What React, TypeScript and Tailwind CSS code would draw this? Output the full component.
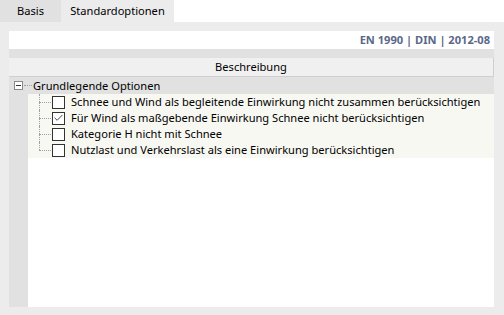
import { Check } from "lucide-react";

const options = [
  { label: "Schnee und Wind als begleitende Einwirkung nicht zusammen berücksichtigen", checked: false },
  { label: "Für Wind als maßgebende Einwirkung Schnee nicht berücksichtigen", checked: true },
  { label: "Kategorie H nicht mit Schnee", checked: false },
  { label: "Nutzlast und Verkehrslast als eine Einwirkung berücksichtigen", checked: false },
];

function OptionRow({ label, checked, last }: { label: string; checked: boolean; last: boolean }) {
  return (
    <div className="flex h-4">
      <div className="w-[19px] shrink-0 bg-[#e1e1e1]" />
      <div className="flex flex-1 items-center bg-[#f8f8f3]">
        {/* tree connector */}
        <div className="relative h-4 w-[24px] shrink-0">
          <div
            className={`absolute left-[11px] top-0 border-l border-dotted border-[#a0a0a0] ${last ? "h-2" : "h-4"}`}
          />
          <div className="absolute left-[11px] top-2 w-[12px] border-t border-dotted border-[#a0a0a0]" />
        </div>
        <div className="flex h-[13px] w-[13px] shrink-0 items-center justify-center border border-[#333333] bg-white">
          {checked && <Check size={12} strokeWidth={1.8} className="text-[#222222]" />}
        </div>
        <span className="ml-[6px] whitespace-nowrap text-[#000000]">{label}</span>
      </div>
    </div>
  );
}

export default function App() {
  return (
    <div
      className="h-[315px] w-[504px] overflow-hidden bg-white text-[11.1px] leading-none text-black"
      style={{ fontFamily: '"Noto Sans", "Liberation Sans", sans-serif' }}
    >
      {/* tabs */}
      <div className="flex h-[22px]">
        <div className="flex w-[61px] items-center justify-center bg-[#e1e1e1]">Basis</div>
        <div className="flex w-[113px] items-center justify-center bg-[#ececec]">Standardoptionen</div>
        <div className="flex-1 bg-white" />
      </div>

      {/* panel */}
      <div className="flex h-[293px] flex-col bg-[#ececec] pb-[8px] pl-[9px] pr-[10px] pt-[9px]">
        <div className="flex h-[18px] items-center justify-end bg-white pr-[4px] font-bold text-[#5a6889]">
          EN 1990 | DIN | 2012-08
        </div>
        <div className="h-[9px] bg-[#e1e1e1]" />
        <div className="flex h-[19px] items-center justify-center border-b border-r border-[#cfcfcf] bg-[#f0f0f0]">
          Beschreibung
        </div>

        <div className="flex flex-1 flex-col bg-white">
          {/* group row */}
          <div className="flex h-[17px] items-center bg-[#e1e1e1]">
            <div className="ml-[5px] flex h-[9px] w-[9px] items-center justify-center border border-[#8a8a8a] bg-white">
              <div className="h-px w-[5px] bg-[#333333]" />
            </div>
            <div className="ml-[1px] w-[8px] border-t border-dotted border-[#a0a0a0]" />
            <span className="ml-[1px]">Grundlegende Optionen</span>
          </div>

          {options.map((o, i) => (
            <OptionRow key={o.label} label={o.label} checked={o.checked} last={i === options.length - 1} />
          ))}

          <div className="flex flex-1">
            <div className="w-[19px] bg-[#e1e1e1]" />
            <div className="flex-1 bg-white" />
          </div>
        </div>
      </div>
    </div>
  );
}
